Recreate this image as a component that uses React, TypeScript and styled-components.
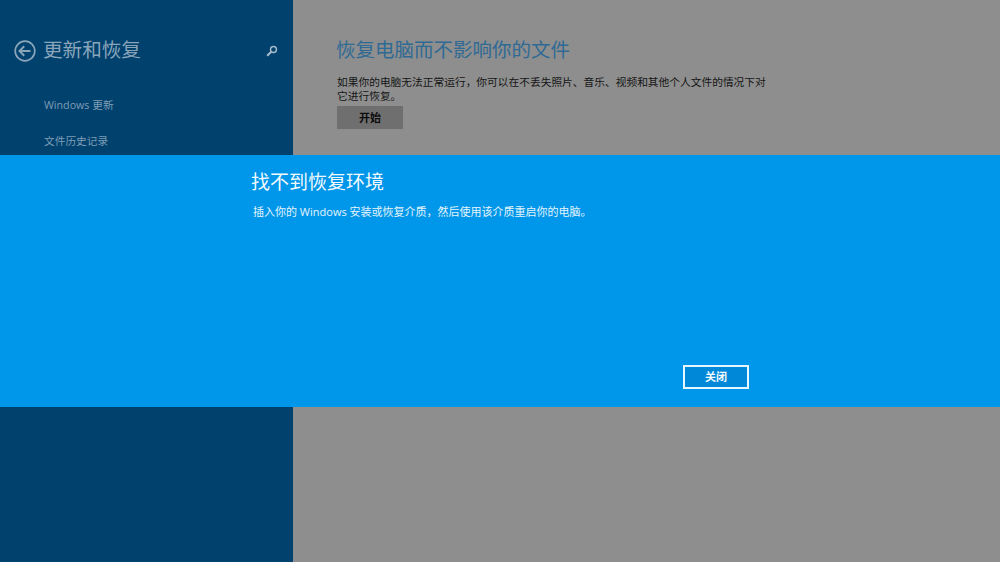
import React from 'react';
import styled, { createGlobalStyle } from 'styled-components';

const FONT = `"Open Sans", "Noto Sans CJK SC", sans-serif`;

const GlobalStyle = createGlobalStyle`
  html, body {
    margin: 0;
    padding: 0;
    width: 100%;
    height: 100%;
    overflow: hidden;
  }
  #root {
    height: 100%;
  }
`;

const Page = styled.div`
  position: relative;
  display: flex;
  width: 1000px;
  height: 562px;
  font-family: ${FONT};
  overflow: hidden;
`;

const Sidebar = styled.div`
  width: 293px;
  height: 100%;
  box-sizing: border-box;
  padding: 37px 15px 0 14px;
  background: #00416e;
  display: flex;
  flex-direction: column;
`;

const SideHeader = styled.div`
  display: flex;
  align-items: center;
  height: 27px;
`;

const SideTitle = styled.div`
  margin-left: 7px;
  padding-bottom: 2px;
  flex: 1;
  font-size: 19.6px;
  line-height: 25px;
  color: #8aa5ba;
  white-space: nowrap;
`;

const NavList = styled.div`
  display: flex;
  flex-direction: column;
  gap: 18px;
  margin-top: 32px;
  padding-left: 30px;
`;

const NavItem = styled.div`
  font-size: 10.7px;
  line-height: 18px;
  color: #7f9db4;
`;

const Main = styled.div`
  flex: 1;
  box-sizing: border-box;
  padding: 36px 0 0 44px;
  background: #8e8e8e;
`;

const MainTitle = styled.div`
  margin-left: -1px;
  font-size: 19.5px;
  line-height: 27px;
  color: #2f6a94;
  white-space: nowrap;
`;

const MainText = styled.div`
  width: 432px;
  margin-top: 12px;
  font-size: 10.73px;
  line-height: 14px;
  color: #151515;
`;

const StartButton = styled.div`
  width: 66px;
  height: 23px;
  margin-top: 3px;
  background: #6f6f6f;
  color: #0c0c0c;
  font-size: 11px;
  font-weight: 700;
  line-height: 23px;
  text-align: center;
`;

const Banner = styled.div`
  position: absolute;
  left: 0;
  right: 0;
  top: 155px;
  height: 252px;
  background: #0096e9;
  box-sizing: border-box;
  padding: 14px 251px 0 251px;
  display: flex;
  flex-direction: column;
`;

const BannerTitle = styled.div`
  font-size: 19px;
  line-height: 26px;
  color: #f2fafe;
  white-space: nowrap;
`;

const BannerText = styled.div`
  margin-top: 9px;
  padding-left: 2px;
  font-size: 11px;
  line-height: 16px;
  color: #e6f5fd;
  white-space: nowrap;
`;

const BannerActions = styled.div`
  margin-top: auto;
  margin-bottom: 18px;
  display: flex;
  justify-content: flex-end;
`;

const CloseButton = styled.div`
  width: 66px;
  height: 24px;
  box-sizing: border-box;
  border: 2px solid #e4f6fe;
  color: #f2fafe;
  background: #0088d8;
  font-size: 11px;
  font-weight: 700;
  line-height: 20px;
  text-align: center;
`;

function BackIcon() {
  return (
    <svg width="22" height="22" viewBox="0 0 22 22" fill="none" stroke="#8aa5ba">
      <circle cx="11" cy="11" r="9.8" strokeWidth="1.7" />
      <path d="M5.5 11H16.5M10.2 6.2L5.5 11L10.2 15.8" strokeWidth="2" />
    </svg>
  );
}

function SearchIcon() {
  return (
    <svg width="12" height="12" viewBox="0 0 12 12" fill="none" stroke="#a9bccb">
      <circle cx="7.5" cy="4.5" r="3" strokeWidth="1.4" />
      <path d="M5.2 6.8L1.2 10.8" strokeWidth="2" />
    </svg>
  );
}

export default function App() {
  return (
    <Page>
      <GlobalStyle />
      <Sidebar>
        <SideHeader>
          <BackIcon />
          <SideTitle>更新和恢复</SideTitle>
          <SearchIcon />
        </SideHeader>
        <NavList>
          <NavItem>Windows 更新</NavItem>
          <NavItem>文件历史记录</NavItem>
        </NavList>
      </Sidebar>
      <Main>
        <MainTitle>恢复电脑而不影响你的文件</MainTitle>
        <MainText>如果你的电脑无法正常运行，你可以在不丢失照片、音乐、视频和其他个人文件的情况下对它进行恢复。</MainText>
        <StartButton>开始</StartButton>
      </Main>
      <Banner>
        <BannerTitle>找不到恢复环境</BannerTitle>
        <BannerText>插入你的 Windows 安装或恢复介质，然后使用该介质重启你的电脑。</BannerText>
        <BannerActions>
          <CloseButton>关闭</CloseButton>
        </BannerActions>
      </Banner>
    </Page>
  );
}
